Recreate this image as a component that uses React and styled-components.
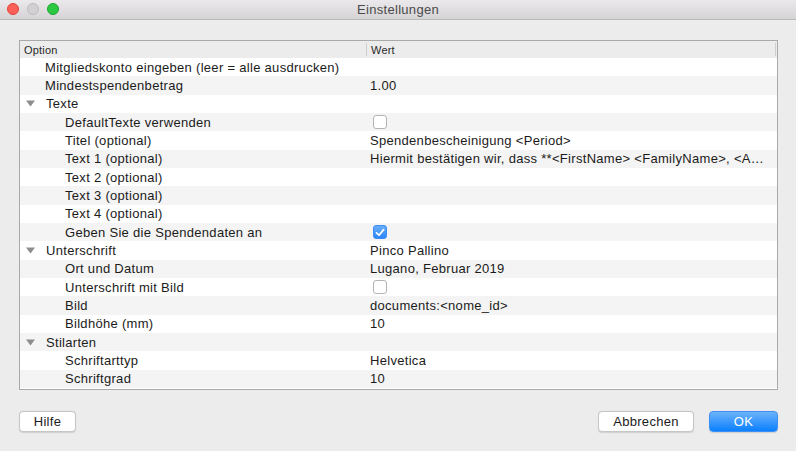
import styled, { createGlobalStyle } from 'styled-components';

const GlobalStyle = createGlobalStyle`
    html, body {
        margin: 0;
        padding: 0;
        background: #ececec;
    }
    body {
        font-family: "Liberation Sans", Arial, sans-serif;
        font-size: 13px;
        letter-spacing: 0.3px;
        color: #1b1b1b;
    }
`;

const Window = styled.div`
    display: flex;
    flex-direction: column;
    inline-size: 796px;
    block-size: 451px;
    background: #ececec;
    overflow: hidden;
`;

const TitleBar = styled.div`
    position: relative;
    display: flex;
    align-items: center;
    justify-content: center;
    block-size: 19px;
    background: linear-gradient(#ebe9eb, #d5d3d5);
    border-block-end: 1px solid #b9b9b9;
`;

const Lights = styled.div`
    position: absolute;
    inset-inline-start: 7px;
    inset-block-start: 3px;
    display: flex;
    gap: 8px;
`;

const Light = styled.span`
    inline-size: 12px;
    block-size: 12px;
    border-radius: 50%;
    box-sizing: border-box;
    background: ${({ $color }) => $color};
    border: 0.5px solid ${({ $edge }) => $edge};
`;

const Title = styled.div`
    font-size: 13px;
    color: #4a4a4a;
`;

const Content = styled.div`
    flex: 1;
    display: flex;
    flex-direction: column;
    padding: 20px 18px 0 19px;
`;

const Table = styled.div`
    display: flex;
    flex-direction: column;
    block-size: 350px;
    box-sizing: border-box;
    border: 1px solid #a9a9a9;
    background: #ffffff;
`;

const Header = styled.div`
    position: relative;
    display: grid;
    grid-template-columns: 346px 1fr;
    block-size: 17px;
    background: #ececec;
    font-size: 11px;
    letter-spacing: 0.2px;
    color: #2a2a2a;

    &::after {
        content: '';
        position: absolute;
        inset-inline-end: 1px;
        inset-block: 2px;
        inline-size: 1px;
        background: #cfcfcf;
    }
`;

const HeaderCell = styled.div`
    display: flex;
    align-items: center;
    padding-inline-start: 4px;
    border-inline-start: ${({ $divider }) => ($divider ? '1px solid #cfcfcf' : 'none')};
    margin-block: ${({ $divider }) => ($divider ? '2px' : '0')};
`;

const Body = styled.div`
    flex: 1;
    display: flex;
    flex-direction: column;
`;

const Row = styled.div`
    display: grid;
    grid-template-columns: 347px 1fr;
    block-size: 18.33px;
    align-items: center;
    background: ${({ $odd }) => ($odd ? '#f4f4f4' : '#ffffff')};
`;

const OptionCell = styled.div`
    display: flex;
    align-items: center;
    padding-inline-start: ${({ $level }) => 25 + $level * 20}px;
    white-space: nowrap;
`;

const Toggle = styled.span`
    inline-size: 20px;
    margin-inline-start: -19px;
    display: flex;
    align-items: center;
    color: #8d8d8d;
`;

const ValueCell = styled.div`
    display: flex;
    align-items: center;
    padding-inline: 3px 9px;
    overflow: hidden;
    white-space: nowrap;
`;

const ValueText = styled.span`
    overflow: hidden;
    text-overflow: ellipsis;
`;

const Check = styled.span`
    display: inline-flex;
    align-items: center;
    justify-content: center;
    inline-size: 14px;
    block-size: 14px;
    box-sizing: border-box;
    margin-inline-start: 3px;
    border-radius: 3px;
    border: 1px solid ${({ $checked }) => ($checked ? '#3b8cf3' : '#b4b4b4')};
    background: ${({ $checked }) => ($checked ? 'linear-gradient(#68aefb, #2d87f8)' : '#ffffff')};
`;

const Footer = styled.div`
    display: flex;
    align-items: center;
    padding-block-start: 21px;
    gap: 15px;
`;

const Spacer = styled.div`
    flex: 1;
`;

const Button = styled.button`
    block-size: 21px;
    padding-inline: 0;
    box-sizing: border-box;
    font: inherit;
    font-size: 13px;
    letter-spacing: 0.3px;
    border-radius: 4px;
    border: 1px solid ${({ $primary }) => ($primary ? '#3d8ff5' : '#c6c6c6')};
    background: ${({ $primary }) => ($primary ? 'linear-gradient(#6cb3fa, #0b80ff)' : '#ffffff')};
    color: ${({ $primary }) => ($primary ? '#ffffff' : '#1b1b1b')};
    box-shadow: 0 0.5px 1px rgba(0, 0, 0, 0.12);
    inline-size: ${({ $width }) => $width}px;
`;

const rows = [
    { label: 'Mitgliedskonto eingeben (leer = alle ausdrucken)', level: 0 },
    { label: 'Mindestspendenbetrag', level: 0, value: '1.00' },
    { label: 'Texte', level: 0, group: true },
    { label: 'DefaultTexte verwenden', level: 1, check: false },
    { label: 'Titel (optional)', level: 1, value: 'Spendenbescheinigung <Period>' },
    { label: 'Text 1 (optional)', level: 1, value: 'Hiermit bestätigen wir, dass **<FirstName> <FamilyName>, <A…' },
    { label: 'Text 2 (optional)', level: 1 },
    { label: 'Text 3 (optional)', level: 1 },
    { label: 'Text 4 (optional)', level: 1 },
    { label: 'Geben Sie die Spendendaten an', level: 1, check: true },
    { label: 'Unterschrift', level: 0, group: true, value: 'Pinco Pallino' },
    { label: 'Ort und Datum', level: 1, value: 'Lugano, Februar 2019' },
    { label: 'Unterschrift mit Bild', level: 1, check: false },
    { label: 'Bild', level: 1, value: 'documents:<nome_id>' },
    { label: 'Bildhöhe (mm)', level: 1, value: '10' },
    { label: 'Stilarten', level: 0, group: true },
    { label: 'Schriftarttyp', level: 1, value: 'Helvetica' },
    { label: 'Schriftgrad', level: 1, value: '10' },
];

function Triangle() {
    return (
        <svg width="9" height="7" viewBox="0 0 9 7">
            <path d="M0 0.5 L9 0.5 L4.5 6.5 Z" fill="currentColor" />
        </svg>
    );
}

function CheckMark() {
    return (
        <svg width="10" height="9" viewBox="0 0 10 9">
            <path d="M1.5 4.8 L4 7.2 L8.6 1.6" fill="none" stroke="#fff" strokeWidth="1.7" strokeLinecap="round" strokeLinejoin="round" />
        </svg>
    );
}

export default function App() {
    return (
        <>
            <GlobalStyle />
            <Window>
                <TitleBar>
                    <Lights>
                        <Light $color="#fc5f57" $edge="#e0443e" />
                        <Light $color="#d2d0d2" $edge="#bdbbbd" />
                        <Light $color="#2bc840" $edge="#20a533" />
                    </Lights>
                    <Title>Einstellungen</Title>
                </TitleBar>
                <Content>
                    <Table>
                        <Header>
                            <HeaderCell>Option</HeaderCell>
                            <HeaderCell $divider>Wert</HeaderCell>
                        </Header>
                        <Body>
                            {rows.map((row, i) => (
                                <Row key={row.label} $odd={i % 2 === 1}>
                                    <OptionCell $level={row.level}>
                                        {row.group && (
                                            <Toggle>
                                                <Triangle />
                                            </Toggle>
                                        )}
                                        {row.label}
                                    </OptionCell>
                                    <ValueCell>
                                        {row.check !== undefined ? (
                                            <Check $checked={row.check}>{row.check && <CheckMark />}</Check>
                                        ) : (
                                            <ValueText>{row.value}</ValueText>
                                        )}
                                    </ValueCell>
                                </Row>
                            ))}
                        </Body>
                    </Table>
                    <Footer>
                        <Button $width={57}>Hilfe</Button>
                        <Spacer />
                        <Button $width={96}>Abbrechen</Button>
                        <Button $primary $width={69}>OK</Button>
                    </Footer>
                </Content>
            </Window>
        </>
    );
}
